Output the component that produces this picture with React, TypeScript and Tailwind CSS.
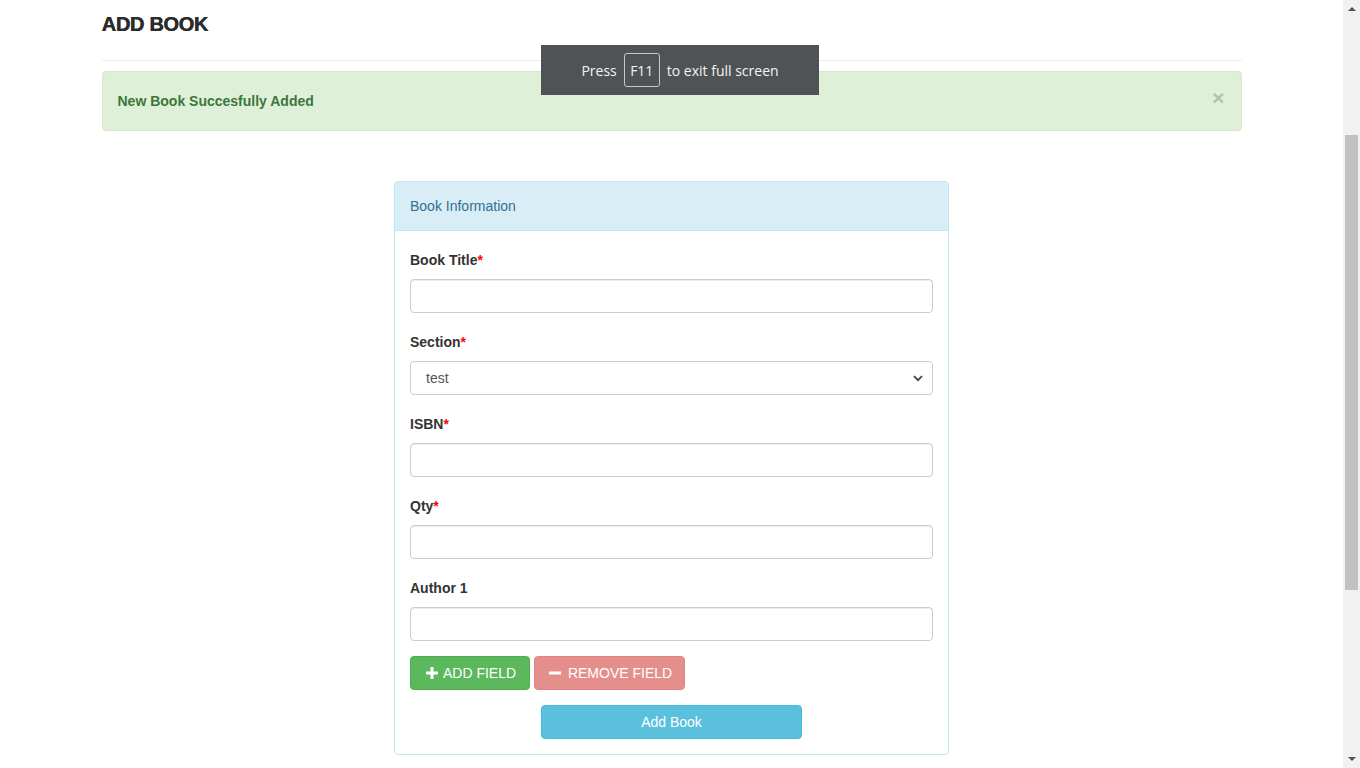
import React from "react";

const Label = ({ text, req }: { text: string; req?: boolean }) => (
  <div className="h-[20px] leading-[20px] text-[14px] font-bold text-[#333] mb-[9px]">
    {text}
    {req && <span className="text-[#ff0000]">*</span>}
  </div>
);

const Input = () => (
  <div className="h-[34px] w-full rounded-[4px] border border-[#ccc] bg-white shadow-[inset_0_1px_1px_rgba(0,0,0,0.075)]" />
);

export default function App() {
  return (
    <div className="relative flex h-screen w-full overflow-hidden bg-white" style={{ fontFamily: '"Liberation Sans", Arial, sans-serif' }}>
      <div className="flex-1 min-w-0">
        <div className="w-[1140px] mx-auto">
          <div className="pt-[10px] h-[38px] leading-[28px] text-[20px] font-bold text-[#2b2b2b] tracking-[-0.3px] [text-shadow:0.5px_0_0_#2b2b2b]">ADD BOOK</div>
          <div className="mt-[22px] border-t border-[#eee]" />
          <div className="mt-[10px] h-[60px] rounded-[4px] border border-[#d6e9c6] bg-[#dff0d8] flex items-center justify-between pl-[15px] pr-[16px]">
            <span className="text-[14px] font-bold text-[#3c763d]">New Book Succesfully Added</span>
            <span className="mb-[8px] text-[21px] font-bold leading-none text-black opacity-20">×</span>
          </div>
        </div>
        <div className="mt-[50px] w-[555px] mx-auto rounded-[4px] border border-[#bce8f1] bg-white">
          <div className="h-[49px] border-b border-[#bce8f1] bg-[#d9edf7] rounded-t-[3px] flex items-center px-[15px] text-[14px] text-[#31708f]">
            Book Information
          </div>
          <div className="px-[15px] pt-[19px] pb-[15px] flex flex-col">
            <div className="flex flex-col gap-[19px]">
              <div>
                <Label text="Book Title" req />
                <Input />
              </div>
              <div>
                <Label text="Section" req />
                <div className="h-[34px] w-full rounded-[4px] border border-[#ccc] bg-white flex items-center justify-between pl-[15px] pr-[9px] text-[14px] text-[#555]">
                  <span>test</span>
                  <svg width="10" height="7" viewBox="0 0 10 7">
                    <path d="M1 1.2 L5 5.2 L9 1.2" fill="none" stroke="#444" strokeWidth="1.8" />
                  </svg>
                </div>
              </div>
              <div>
                <Label text="ISBN" req />
                <Input />
              </div>
              <div>
                <Label text="Qty" req />
                <Input />
              </div>
              <div>
                <Label text="Author 1" />
                <Input />
              </div>
            </div>
            <div className="mt-[15px] flex gap-[4px]">
              <div className="h-[34px] w-[120px] rounded-[4px] border border-[#4cae4c] bg-[#5cb85c] flex items-center justify-center gap-[5px] pl-[2px] text-[14px] text-white">
                <svg width="12" height="12" viewBox="0 0 12 12">
                  <path d="M4.5 0h3v4.5H12v3H7.5V12h-3V7.5H0v-3h4.5z" fill="#fff" />
                </svg>
                <span>ADD FIELD</span>
              </div>
              <div className="h-[34px] w-[151px] rounded-[4px] border border-[#e08582] bg-[#e58f8c] flex items-center justify-center gap-[7px] pl-[2px] text-[14px] text-white">
                <svg width="12" height="12" viewBox="0 0 12 12">
                  <path d="M0 4.5h12v3H0z" fill="#fff" />
                </svg>
                <span>REMOVE FIELD</span>
              </div>
            </div>
            <div className="mt-[15px] flex justify-center">
              <div className="h-[34px] w-[261px] rounded-[4px] border border-[#46b8da] bg-[#5bc0de] flex items-center justify-center text-[14px] text-white">
                Add Book
              </div>
            </div>
          </div>
        </div>
      </div>
      <div className="w-[17px] h-full bg-[#f1f1f1] flex flex-col items-center">
        <div className="h-[17px] flex items-center justify-center">
          <svg width="8" height="5" viewBox="0 0 8 5"><path d="M0 5L4 1L8 5z" fill="#505050" /></svg>
        </div>
        <div className="mt-[118px] h-[455px] w-[13px] bg-[#c1c1c1]" />
        <div className="flex-1" />
        <div className="h-[17px] flex items-center justify-center">
          <svg width="8" height="5" viewBox="0 0 8 5"><path d="M0 0L4 4L8 0z" fill="#505050" /></svg>
        </div>
      </div>
      <div
        className="absolute left-[541px] top-[45px] w-[278px] h-[50px] bg-[#505355] flex items-center justify-center gap-[7px] text-[14px] text-[#f3f3f3]"
        style={{ fontFamily: '"Open Sans", "Noto Sans", sans-serif' }}
      >
        <span>Press</span>
        <span className="h-[34px] w-[36px] rounded-[3px] border border-[#c8c8c8] flex items-center justify-center">F11</span>
        <span>to exit full screen</span>
      </div>
    </div>
  );
}
